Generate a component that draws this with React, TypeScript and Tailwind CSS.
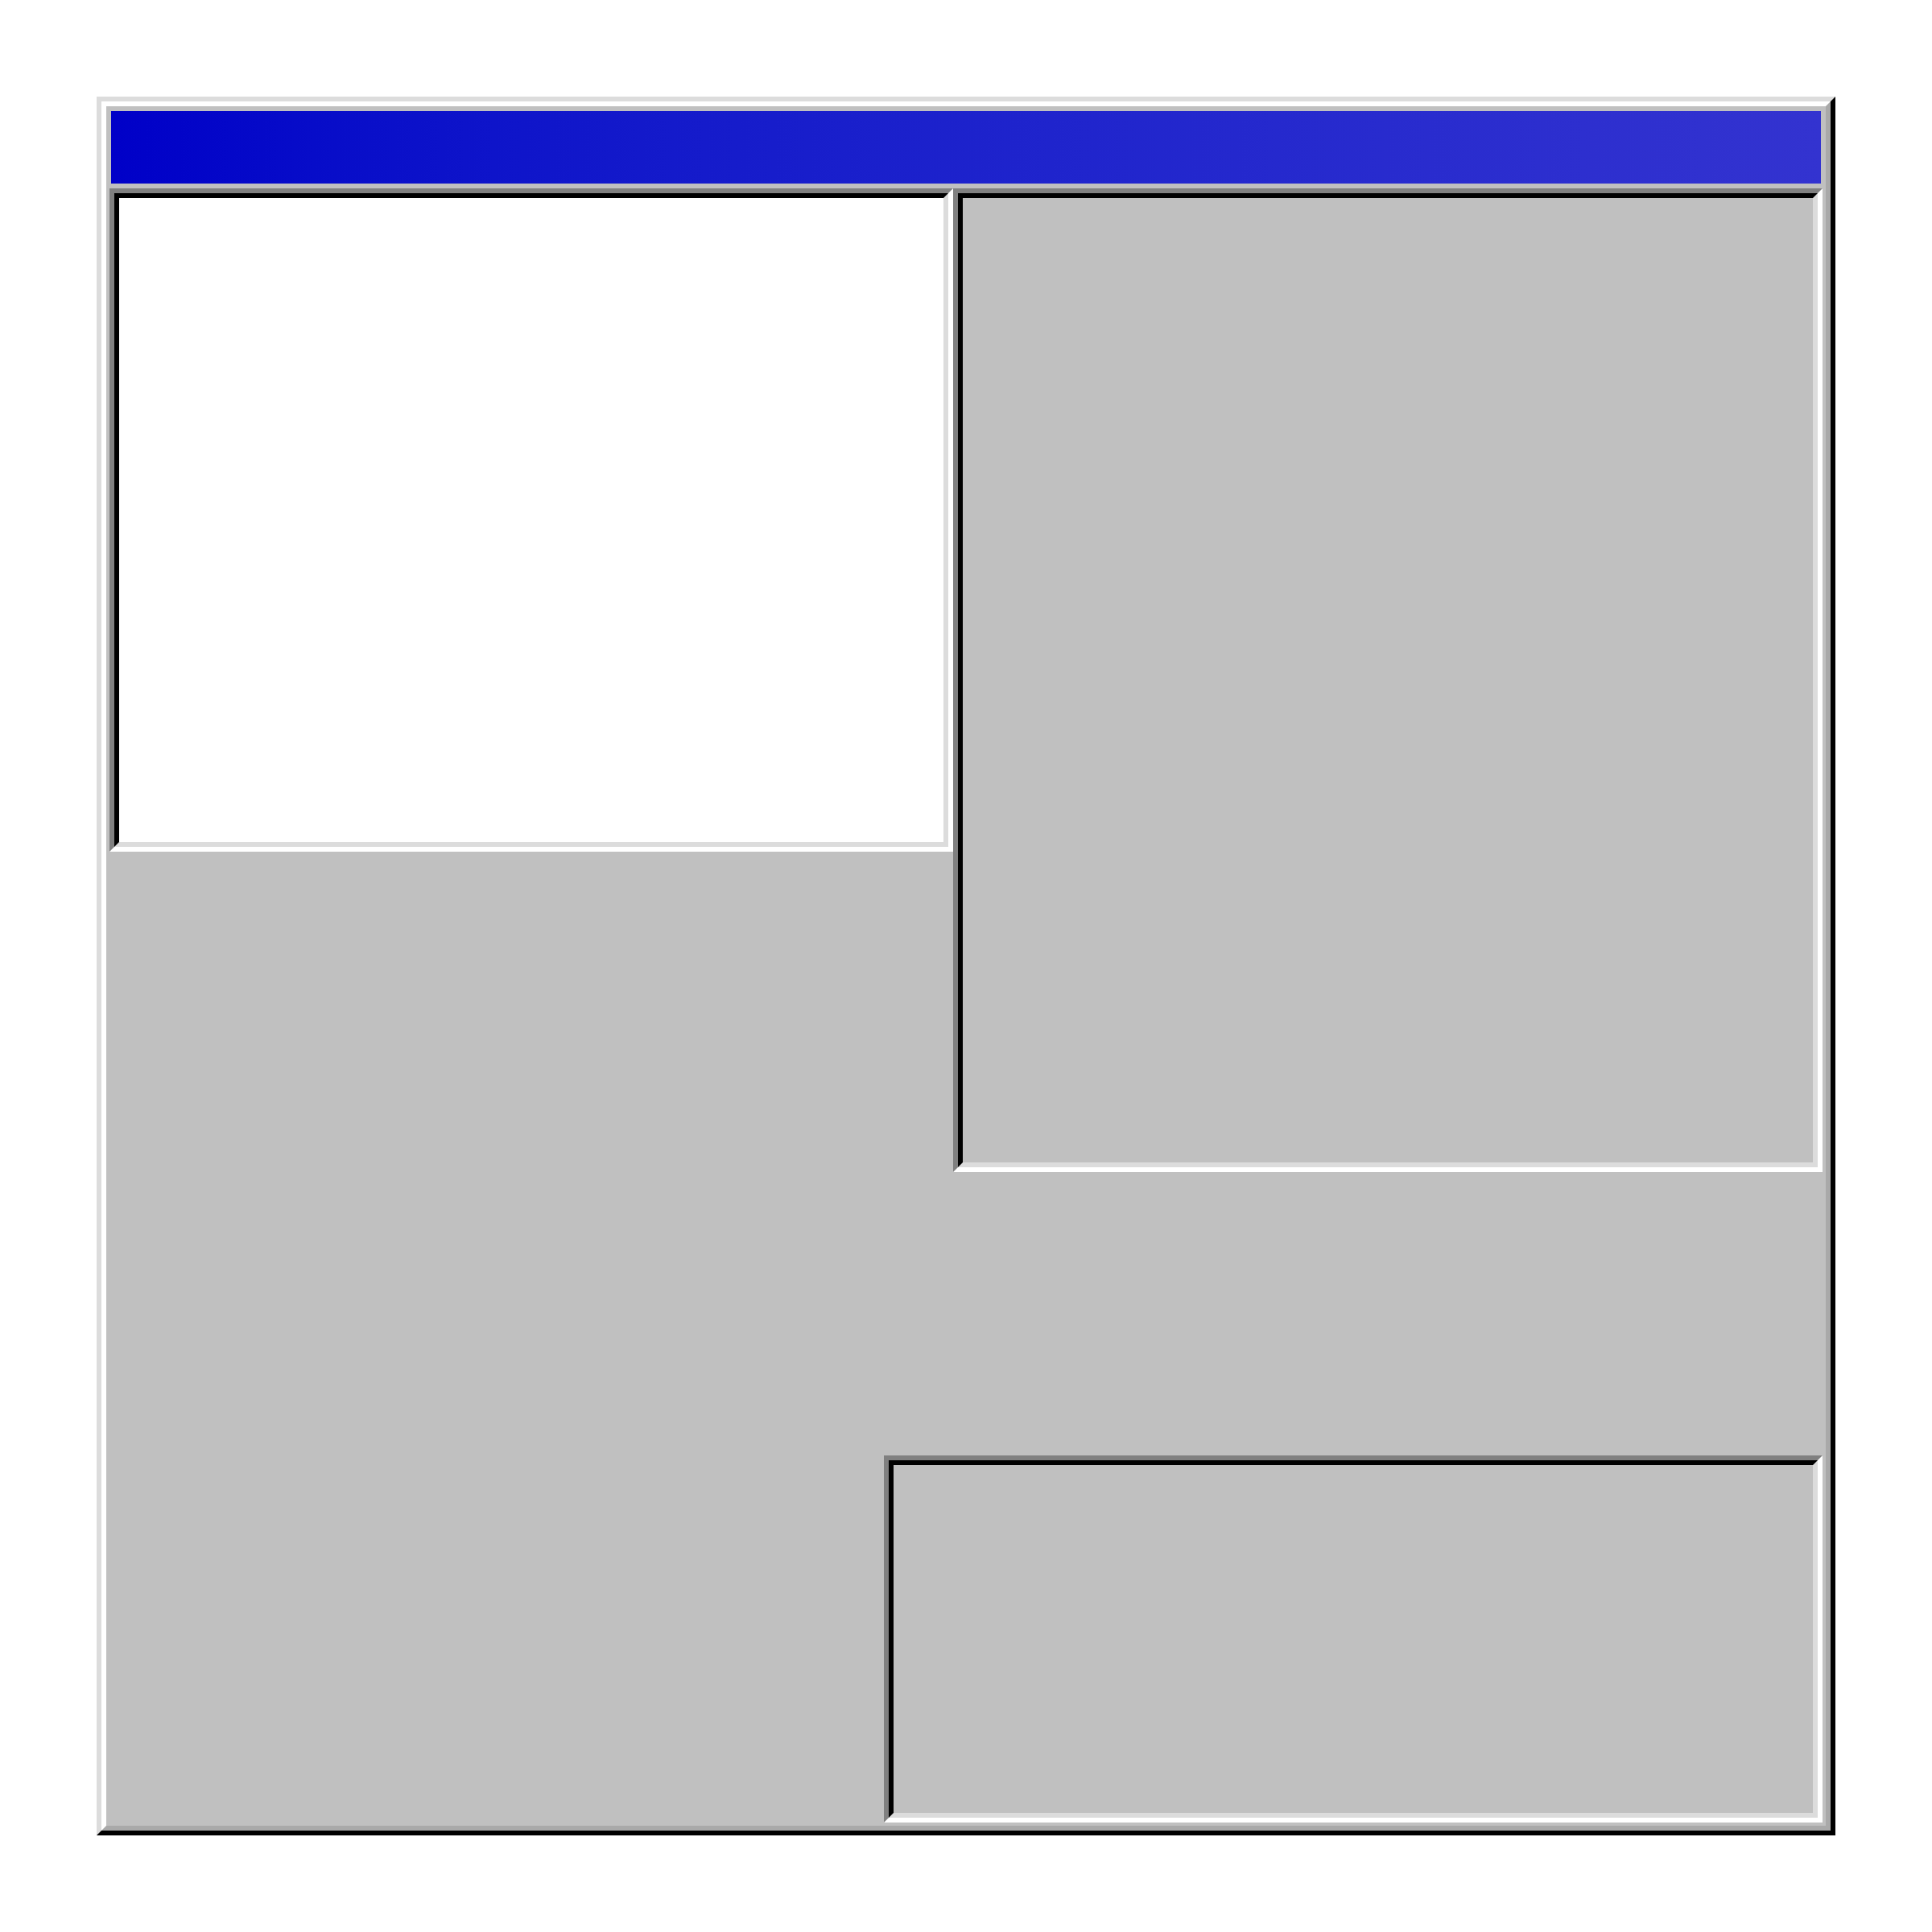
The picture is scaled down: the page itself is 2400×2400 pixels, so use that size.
import React from "react";

// Sunken panel: dark edges top/left, light edges bottom/right
function InsetPanel({ className, fill }: { className: string; fill: string }) {
  return (
    <div
      className={`${className} border-[6px] border-t-[#808080] border-l-[#808080] border-b-white border-r-white`}
    >
      <div
        className={`h-full w-full border-[6px] border-t-black border-l-black border-b-[#dcdcdc] border-r-[#dcdcdc] ${fill}`}
      />
    </div>
  );
}

export default function App() {
  return (
    <div className="min-h-[2400px] w-[2400px] bg-white p-[120px]">
      <div className="h-[2160px] w-[2160px] border-[6px] border-t-[#dcdcdc] border-l-[#dcdcdc] border-b-black border-r-black">
        <div className="flex h-full w-full flex-col border-[6px] border-t-white border-l-white border-b-[#a9a9a9] border-r-[#a9a9a9] bg-[#c0c0c0]">
          <div className="px-[6px] pt-[6px]">
            <div className="h-[90px] w-full bg-gradient-to-r from-[#0000c8] to-[#3333d0]" />
          </div>
          <div className="flex flex-col px-[4px] pb-[4px] pt-[6px]">
            <div className="flex items-start">
              <InsetPanel className="h-[824px] w-[1048px]" fill="bg-white" />
              <InsetPanel className="h-[1222px] w-[1080px]" fill="bg-[#c0c0c0]" />
            </div>
            <div className="mt-[352px] flex justify-end">
              <InsetPanel className="h-[456px] w-[1166px]" fill="bg-[#c0c0c0]" />
            </div>
          </div>
        </div>
      </div>
    </div>
  );
}
